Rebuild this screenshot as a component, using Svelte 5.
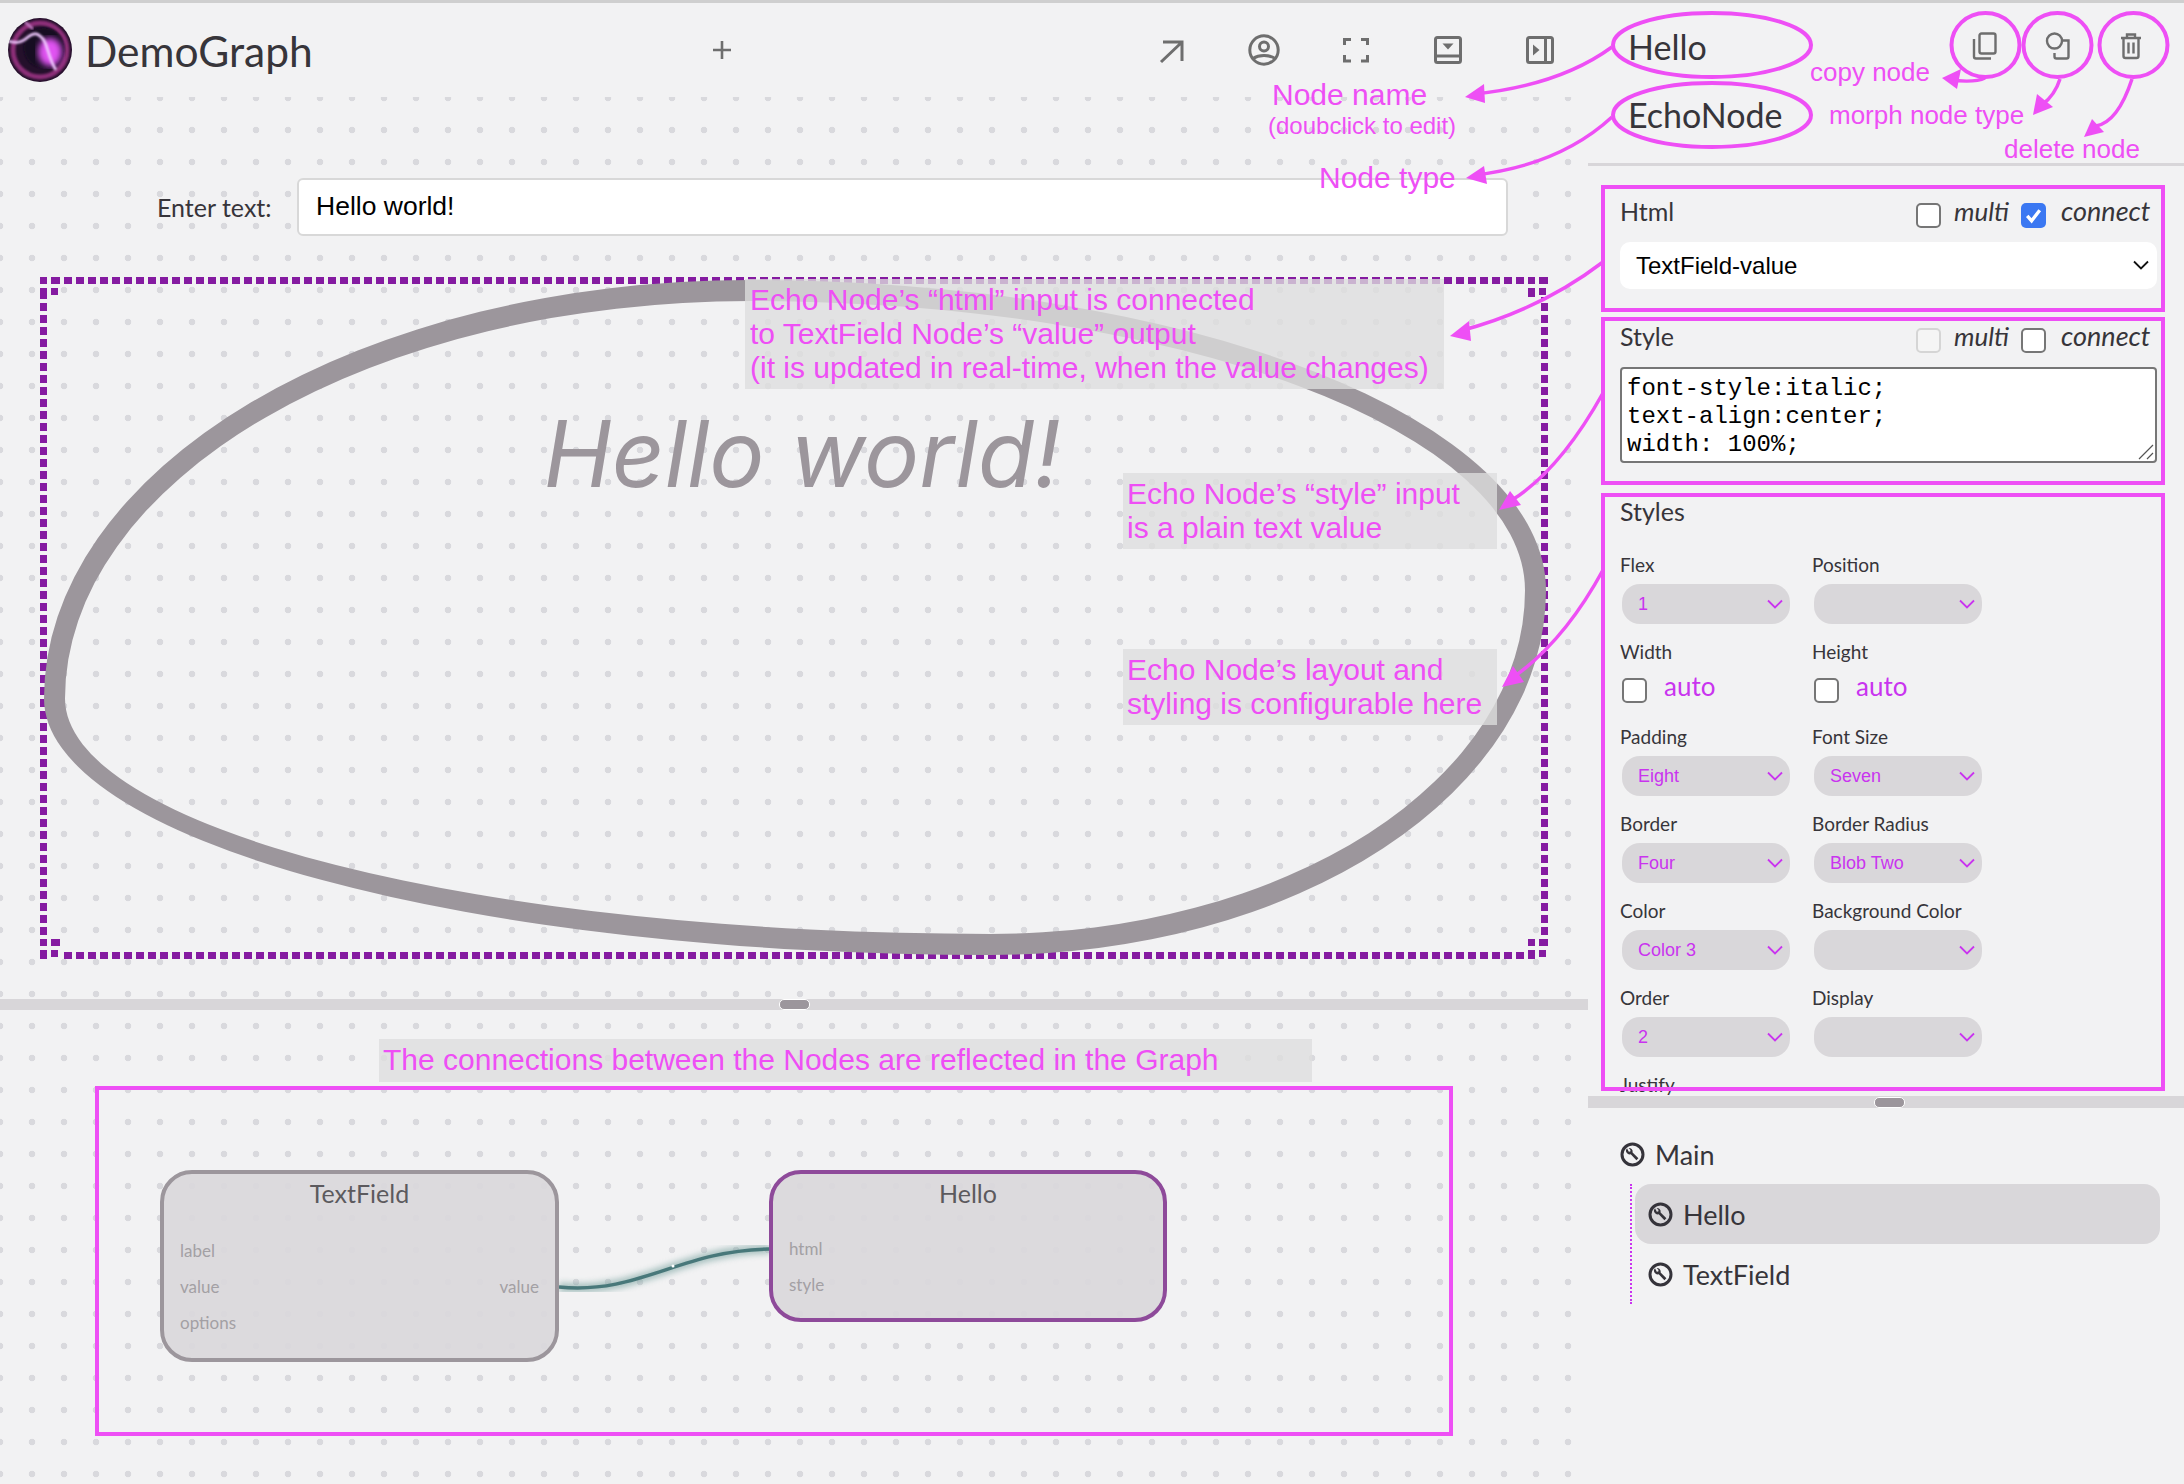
<script>
    const stylesLeft = [
        { label: 'Flex', value: '1' },
        { label: 'Position', value: '' },
        { label: 'Width', check: 'auto' },
        { label: 'Height', check: 'auto' },
        { label: 'Padding', value: 'Eight' },
        { label: 'Font Size', value: 'Seven' },
        { label: 'Border', value: 'Four' },
        { label: 'Border Radius', value: 'Blob Two' },
        { label: 'Color', value: 'Color 3' },
        { label: 'Background Color', value: '' },
        { label: 'Order', value: '2' },
        { label: 'Display', value: '' },
        { label: 'Justify', value: '' }
    ];

    // arrows of the annotation layer: curve and head triangle
    const arrows = [
        { d: 'M1612 47 Q1560 85 1475 94', head: '1465,97 1484,84 1485,103' },
        { d: 'M1612 117 Q1560 165 1475 175', head: '1466,178 1484,166 1487,184' },
        { d: 'M1985 78 Q1975 83 1950 80', head: '1942,78 1961,69 1957,89' },
        { d: 'M2060 79 Q2055 95 2042 105', head: '2033,115 2037,94 2053,107' },
        { d: 'M2132 79 Q2118 122 2096 126', head: '2084,137 2092,119 2104,132' },
        { d: 'M1603 262 Q1540 310 1460 331', head: '1450,336 1469,321 1471,341' },
        { d: 'M1603 393 Q1560 470 1512 500', head: '1499,510 1510,491 1521,505' },
        { d: 'M1603 570 Q1565 640 1515 676', head: '1502,687 1513,666 1524,682' }
    ];
</script>

{#snippet wrench()}
    <svg class="tree-icon" viewBox="0 0 25 25">
        <circle cx="12.5" cy="12.5" r="10.5" fill="none" stroke="#35333a" stroke-width="3" />
        <path d="M7 6.200a3.800 3.800 0 0 0 .4 5.300 3.800 3.800 0 0 0 3.300.8l5.700 5.900 2-2-5.800-5.700a3.800 3.800 0 0 0-1-3.400 3.800 3.800 0 0 0-3-1.100l1.900 2-.2 1.500-1.500.3z" fill="#35333a" />
    </svg>
{/snippet}

{#snippet chevron()}
    <svg class="chev" viewBox="0 0 16 10"><path d="M1 1.500l7 7 7-7" fill="none" stroke="currentColor" stroke-width="1.800" /></svg>
{/snippet}

<div class="page">
    <div class="topline"></div>

    <div class="left">
        <header class="header">
            <svg class="logo" viewBox="0 0 64 64">
                <defs>
                    <clipPath id="logoclip"><circle cx="32" cy="32" r="32" /></clipPath>
                    <filter id="soft"><feGaussianBlur stdDeviation="0.800" /></filter>
                    <filter id="glow"><feGaussianBlur stdDeviation="3" /></filter>
                </defs>
                <g clip-path="url(#logoclip)">
                    <rect width="64" height="64" fill="#24102b" />
                    <circle cx="32" cy="32" r="27" fill="none" stroke="#8c2f78" stroke-width="5" filter="url(#soft)" />
                    <circle cx="36" cy="30" r="20" fill="#130a20" filter="url(#soft)" />
                    <ellipse cx="42" cy="34" rx="12" ry="14" fill="#e052f2" filter="url(#glow)" />
                    <path d="M0 23C10 26 14 24 20 19S30 15 35 21 40 40 48 52" fill="none" stroke="#f0c8ff" stroke-width="2.800" filter="url(#soft)" />
                    <path d="M17 4l8 7" stroke="#c47cc4" stroke-width="2.500" filter="url(#soft)" />
                </g>
            </svg>
            <h1 class="brand">DemoGraph</h1>
            <svg class="plus" viewBox="0 0 24 24"><path d="M12 3v18M3 12h18" stroke="#6e6e6e" stroke-width="2.600" /></svg>
            <div class="tools">
                <svg viewBox="0 0 32 32"><path d="M5 28L25 9M7 8h19v19" fill="none" stroke="#6e6e6e" stroke-width="3" /></svg>
                <svg viewBox="0 0 32 32" fill="none" stroke="#6e6e6e" stroke-width="3">
                    <circle cx="16" cy="16" r="14.200" /><circle cx="16" cy="12.500" r="4.500" /><path d="M5 24.500C11 20.500 21 20.500 27 24.500" />
                </svg>
                <svg viewBox="0 0 32 32"><path d="M4.500 11V5.500h6.500M21 5.500h6.500V11M4.500 21v6h6.500M21 27h6.500v-6" fill="none" stroke="#6e6e6e" stroke-width="3" /></svg>
                <svg viewBox="0 0 32 32">
                    <rect x="3.500" y="3.500" width="25" height="25" rx="2" fill="none" stroke="#6e6e6e" stroke-width="3" />
                    <path d="M3.500 22h25" stroke="#6e6e6e" stroke-width="3" /><path d="M10.500 9.500h11L16 15.500z" fill="#6e6e6e" />
                </svg>
                <svg viewBox="0 0 32 32">
                    <rect x="3.500" y="3.500" width="25" height="25" rx="2" fill="none" stroke="#6e6e6e" stroke-width="3" />
                    <path d="M21.500 3.500v25" stroke="#6e6e6e" stroke-width="3" /><path d="M9 10.500v11l6.500-5.500z" fill="#6e6e6e" />
                </svg>
            </div>
        </header>

        <section class="canvas">
            <div class="form-row">
                <label for="txt">Enter text:</label>
                <input id="txt" type="text" value="Hello world!" />
            </div>
            <div class="frame">
                <div class="blob"><p>Hello world!</p></div>
                <svg class="corner tl" viewBox="0 0 20 20"><use href="#cornermark" /></svg>
                <svg class="corner tr" viewBox="0 0 20 20"><use href="#cornermark" /></svg>
                <svg class="corner bl" viewBox="0 0 20 20"><use href="#cornermark" /></svg>
                <svg class="corner br" viewBox="0 0 20 20">
                    <g id="cornermark" fill="#851ba1"><rect width="7" height="7" /><rect x="11" width="9" height="7" /><rect y="11" width="7" height="9" /><rect x="11" y="11" width="7" height="7" /></g>
                </svg>
            </div>
        </section>

        <div class="splitter"><span class="grip"></span></div>

        <section class="graph">
            <svg class="edge" viewBox="0 0 800 400">
                <defs><filter id="halo"><feGaussianBlur stdDeviation="3" /></filter></defs>
                <path d="M559 277C640 285 680 240 770 239" fill="none" stroke="#6f9c99" stroke-width="9" opacity=".6" filter="url(#halo)" />
                <path d="M559 277C640 285 680 240 770 239" fill="none" stroke="#48787a" stroke-width="3.500" />
                <circle cx="673" cy="256" r="1.500" fill="#fff" />
            </svg>
            <div class="node node-a">
                <div class="node-title">TextField</div>
                <div class="ports">
                    <span>label</span>
                    <span class="port-line"><span>value</span><span>value</span></span>
                    <span>options</span>
                </div>
            </div>
            <div class="node node-b">
                <div class="node-title">Hello</div>
                <div class="ports">
                    <span>html</span>
                    <span>style</span>
                </div>
            </div>
        </section>
    </div>

    <aside class="right">
        <div class="node-head">
            <div class="names">
                <div>Hello</div>
                <div>EchoNode</div>
            </div>
            <div class="actions">
                <svg viewBox="0 0 26 28" fill="none" stroke="#6e6e6e" stroke-width="2.400">
                    <rect x="7.500" y="1.500" width="16" height="20" rx="2" /><path d="M2 7v17.500a2 2 0 0 0 2 2h15" />
                </svg>
                <svg viewBox="0 0 26 28" fill="none" stroke="#6e6e6e" stroke-width="2.400">
                    <circle cx="9.500" cy="9" r="7.500" /><path d="M18 8.500h5.500v16a2 2 0 0 1-2 2H11.500a2 2 0 0 1-2-2V21" />
                </svg>
                <svg viewBox="0 0 26 28" fill="none" stroke="#6e6e6e" stroke-width="2.400">
                    <path d="M3 6h20M9 6V2.500h8V6M5.500 6v18a2 2 0 0 0 2 2h11a2 2 0 0 0 2-2V6M10.500 10.500v11M15.500 10.500v11" />
                </svg>
            </div>
        </div>

        <div class="inspector">
            <div class="prop prop-html">
                <div class="prop-head">
                    <span class="prop-name">Html</span>
                    <span class="box"></span><em>multi</em>
                    <span class="box on">
                        <svg viewBox="0 0 26 26"><path d="M6.500 13.500l4.500 5 8.500-11" fill="none" stroke="#fff" stroke-width="3.500" /></svg>
                    </span><em class="last">connect</em>
                </div>
                <div class="select-wide">TextField-value {@render chevron()}</div>
            </div>

            <div class="prop prop-style">
                <div class="prop-head">
                    <span class="prop-name">Style</span>
                    <span class="box off"></span><em>multi</em>
                    <span class="box"></span><em class="last">connect</em>
                </div>
                <div class="textarea">
                    <div>font-style:italic;</div>
                    <div>text-align:center;</div>
                    <div>width: 100%;</div>
                    <svg class="resizer" viewBox="0 0 16 16"><path d="M15 1L1 15M15 9L9 15" stroke="#555" stroke-width="1.200" /></svg>
                </div>
            </div>

            <div class="prop-name styles-title">Styles</div>
            <div class="styles-grid">
                {#each stylesLeft as f}
                    <div class="field">
                        <div class="field-label">{f.label}</div>
                        {#if f.check}
                            <div class="check-row"><span class="box"></span><span class="auto">{f.check}</span></div>
                        {:else}
                            <div class="pill"><span>{f.value}</span>{@render chevron()}</div>
                        {/if}
                    </div>
                {/each}
            </div>
        </div>

        <div class="splitter side"><span class="grip"></span></div>

        <nav class="tree">
            <div class="tree-main">{@render wrench()} Main</div>
            <div class="tree-children">
                <div class="tree-row selected">{@render wrench()} Hello</div>
                <div class="tree-row">{@render wrench()} TextField</div>
            </div>
        </nav>
    </aside>

    <!-- annotations drawn over the screenshot -->
    <svg class="notes" viewBox="0 0 2184 1484">
        <g fill="rgba(222,222,222,.78)">
            <rect x="745" y="279" width="699" height="110" />
            <rect x="1123" y="473" width="374" height="76" />
            <rect x="1123" y="649" width="374" height="76" />
            <rect x="379" y="1039" width="933" height="43" />
        </g>
        <g class="outline">
            <ellipse cx="1712" cy="45" rx="99" ry="32" />
            <ellipse cx="1712" cy="115" rx="99" ry="32" />
            <ellipse cx="1985.500" cy="45" rx="34" ry="32" />
            <ellipse cx="2057.500" cy="45" rx="34" ry="32" />
            <ellipse cx="2133.500" cy="45" rx="34" ry="32" />
            <rect x="1603" y="187" width="560" height="123" />
            <rect x="1603" y="319" width="560" height="164" />
            <rect x="1603" y="495" width="560" height="594" />
            <rect x="97" y="1088" width="1354" height="346" />
        </g>
        {#each arrows as a}
            <path class="arrow" d={a.d} />
            <polygon class="head" points={a.head} />
        {/each}
        <g class="note">
            <text x="750" y="310">Echo Node’s “html” input is connected</text>
            <text x="750" y="344">to TextField Node’s “value” output</text>
            <text x="750" y="378">(it is updated in real-time, when the value changes)</text>
            <text x="1127" y="504">Echo Node’s “style” input</text>
            <text x="1127" y="538">is a plain text value</text>
            <text x="1127" y="680">Echo Node’s layout and</text>
            <text x="1127" y="714">styling is configurable here</text>
            <text x="383" y="1070">The connections between the Nodes are reflected in the Graph</text>
            <text x="1272" y="105">Node name</text>
            <text x="1268" y="134" class="small">(doubclick to edit)</text>
            <text x="1319" y="188">Node type</text>
            <text x="1810" y="81" class="mid">copy node</text>
            <text x="1829" y="124" class="mid">morph node type</text>
            <text x="2004" y="158" class="mid">delete node</text>
        </g>
    </svg>
</div>

<style>
    :global(body) {
        margin: 0;
        background: #f2f2f3;
    }

    .page {
        position: relative;
        width: 2184px;
        height: 1484px;
        overflow: hidden;
        display: grid;
        grid-template-columns: 1588px 596px;
        grid-template-rows: 3px 1481px;
        background: #f2f2f3;
        color: #37353a;
        font-family: Lato, "Noto Sans", sans-serif;
    }

    .topline {
        grid-column: 1 / 3;
        background: #cfcfcf;
    }

    .left {
        display: flex;
        flex-direction: column;
        background-color: #f2f2f3;
        background-image: radial-gradient(circle at 16px 16px, #d9d9dd 3px, transparent 3.600px);
        background-size: 32px 32px;
        background-position: 16px 15px;
    }

    .header {
        height: 94px;
        flex: none;
        display: flex;
        align-items: center;
        padding: 0 32px 0 8px;
        background: #f2f2f3;
        box-sizing: border-box;
    }

    .logo {
        width: 64px;
        height: 64px;
        flex: none;
    }

    .brand {
        margin: 0 0 0 13px;
        width: 226px;
        font-size: 42.500px;
        font-weight: 400;
        white-space: nowrap;
    }

    .plus {
        width: 24px;
        height: 24px;
        margin-left: 399px;
    }

    .tools {
        margin-left: auto;
        display: flex;
        gap: 60px;
    }

    .tools svg {
        width: 32px;
        height: 32px;
    }

    .canvas {
        flex: none;
        height: 902px;
        box-sizing: border-box;
        padding: 81px 40px 0;
    }

    .form-row {
        display: flex;
        align-items: center;
        gap: 25px;
        padding-left: 117px;
        width: 1351px;
    }

    .form-row label {
        font-size: 25px;
        width: 115px;
        white-space: nowrap;
    }

    .form-row input {
        flex: 1;
        height: 58px;
        box-sizing: border-box;
        border: 2px solid #d8d8d8;
        border-radius: 6px;
        background: #fff;
        padding: 0 18px 2px 17px;
        font: 26.500px "Liberation Sans", Arial, sans-serif;
        color: #000;
    }

    .frame {
        position: relative;
        margin-top: 41px;
        width: 1508px;
        height: 682px;
        box-sizing: border-box;
        padding: 3px 2px 4px 4px;
        background:
            repeating-linear-gradient(90deg, #851ba1 0 8px, transparent 8px 12px) top left / 100% 7px no-repeat,
            repeating-linear-gradient(90deg, #851ba1 0 8px, transparent 8px 12px) bottom left / 100% 7px no-repeat,
            repeating-linear-gradient(0deg, #851ba1 0 8px, transparent 8px 12px) top left / 7px 100% no-repeat,
            repeating-linear-gradient(0deg, #851ba1 0 8px, transparent 8px 12px) top right / 7px 100% no-repeat;
    }

    .blob {
        height: 100%;
        box-sizing: border-box;
        border: 21px solid #9c969c;
        border-radius: 47% 53% 37% 63% / 62% 46% 54% 38%;
        padding: 98px 0 0 14px;
        color: #9c969c;
    }

    .blob p {
        margin: 0;
        font-family: Inter, Lato, sans-serif;
        font-size: 92px;
        font-style: italic;
        font-weight: 400;
        line-height: 110px;
        text-align: center;
    }

    .corner {
        position: absolute;
        width: 20px;
        height: 20px;
        background: #f2f2f3;
    }

    .tl { left: 0; top: 0; }
    .tr { right: 0; top: 0; }
    .bl { left: 0; bottom: 0; }
    .br { right: 0; bottom: 0; }

    .splitter {
        position: relative;
        flex: none;
        height: 11px;
        background: #d8d6d9;
    }

    .splitter.side {
        height: 12px;
    }

    .grip {
        position: absolute;
        left: 779px;
        top: 0;
        width: 29px;
        height: 9px;
        border: 1px solid #fff;
        border-radius: 5px;
        background: #9c969c;
    }

    .side .grip {
        left: 286px;
        top: 1px;
    }

    .graph {
        position: relative;
        flex: 1;
    }

    .edge {
        position: absolute;
        left: 0;
        top: 0;
        width: 800px;
        height: 400px;
        overflow: visible;
    }

    .node {
        position: absolute;
        top: 160px;
        box-sizing: border-box;
        width: 398px;
        border: 4px solid #9c969c;
        border-radius: 32px;
        background: rgba(218, 216, 219, 0.92);
        color: #5c5a5e;
    }

    .node-a {
        left: 160px;
        width: 399px;
        height: 192px;
    }

    .node-b {
        left: 769px;
        height: 152px;
        border-color: #8e4a9a;
    }

    .node-title {
        margin-top: 4px;
        text-align: center;
        font-size: 25px;
        line-height: 30px;
    }

    .ports {
        margin-top: 31px;
        padding: 0 16px;
        display: flex;
        flex-direction: column;
        gap: 12px;
        font-size: 17px;
        line-height: 24px;
        color: #a3a0a4;
    }

    .node-b .ports {
        margin-top: 29px;
    }

    .port-line {
        display: flex;
        justify-content: space-between;
    }

    .right {
        display: flex;
        flex-direction: column;
        background: #f2f2f3;
    }

    .node-head {
        flex: none;
        height: 163px;
        box-sizing: border-box;
        border-bottom: 3px solid #d8d6d9;
        display: flex;
        justify-content: space-between;
        padding-left: 40px;
    }

    .names {
        padding-top: 24px;
        display: flex;
        flex-direction: column;
        gap: 28px;
        font-size: 34px;
        line-height: 40px;
    }

    .actions {
        display: flex;
        gap: 47px;
        padding: 29px 40px 0 0;
    }

    .actions svg {
        width: 26px;
        height: 28px;
    }

    .inspector {
        flex: none;
        height: 930px;
        overflow: hidden;
        box-sizing: border-box;
        padding: 0 27px 0 32px;
    }

    .prop-head {
        display: flex;
        align-items: center;
        height: 26px;
        font-size: 26px;
    }

    .prop-name {
        margin-right: auto;
        font-size: 25px;
    }

    .prop-head .prop-name {
        margin-bottom: 8px;
    }

    .prop-head em {
        margin: 0 10px 8px 13px;
        width: 57px;
        line-height: 26px;
    }

    .prop-head em.last {
        width: 96px;
        margin: 0 0 8px 15px;
        font-size: 27px;
    }

    .prop-html {
        padding-top: 36px;
    }

    .prop-style {
        padding-top: 38px;
    }

    .box {
        flex: none;
        display: inline-block;
        width: 25px;
        height: 25px;
        box-sizing: border-box;
        border: 2px solid #767676;
        border-radius: 5px;
        background: #fff;
    }

    .box.on {
        border: none;
        background: #3b78f2;
    }

    .box.on svg {
        display: block;
    }

    .box.off {
        border-color: #d5d5d5;
        background: #f5f5f5;
    }

    .select-wide {
        position: relative;
        margin-top: 14px;
        height: 47px;
        padding-left: 16px;
        border-radius: 10px;
        background: #fff;
        color: #000;
        font: 24px/48px "Liberation Sans", Arial, sans-serif;
    }

    .select-wide .chev {
        position: absolute;
        right: 8px;
        top: 18px;
        color: #111;
    }

    .textarea {
        position: relative;
        margin-top: 14px;
        height: 96px;
        box-sizing: border-box;
        border: 2px solid #767676;
        border-radius: 4px;
        background: #fff;
        color: #000;
        padding: 6px 5px 0;
        font: 24px/28px "Liberation Mono", monospace;
    }

    .resizer {
        position: absolute;
        right: 1px;
        bottom: 1px;
        width: 16px;
        height: 16px;
    }

    .styles-title {
        margin-top: 33px;
        line-height: 30px;
    }

    .styles-grid {
        margin-top: 26px;
        display: grid;
        grid-template-columns: 192px 192px;
        row-gap: 15px;
    }

    .field-label {
        height: 26px;
        line-height: 26px;
        font-size: 19px;
    }

    .pill {
        margin: 6px 0 0 2px;
        width: 168px;
        height: 40px;
        box-sizing: border-box;
        padding: 0 7px 0 16px;
        border-radius: 18px;
        background: #d9d7da;
        color: #c934ef;
        display: flex;
        align-items: center;
        justify-content: space-between;
        font: 18px "Liberation Sans", Arial, sans-serif;
    }

    .chev {
        width: 16px;
        height: 10px;
        display: block;
    }

    .check-row {
        margin: 6px 0 0 2px;
        height: 38px;
        display: flex;
        align-items: center;
        gap: 17px;
    }

    .auto {
        color: #c934ef;
        font-size: 26px;
        line-height: 30px;
        margin-top: -8px;
    }

    .tree {
        padding: 34px 24px 0 32px;
        font-size: 27px;
    }

    .tree-icon {
        width: 25px;
        height: 25px;
        flex: none;
    }

    .tree-main,
    .tree-row {
        display: flex;
        align-items: center;
        gap: 10px;
    }

    .tree-main {
        height: 25px;
    }

    .tree-children {
        margin: 17px 0 0 10px;
        padding: 0 0 0 3px;
        border-left: 2px dotted #c934ef;
    }

    .tree-row {
        height: 60px;
        padding-left: 13px;
        border-radius: 16px;
    }

    .selected {
        background: #d9d7da;
    }

    .notes {
        position: absolute;
        left: 0;
        top: 0;
        width: 2184px;
        height: 1484px;
        pointer-events: none;
    }

    .outline ellipse,
    .outline rect {
        fill: none;
        stroke: #ee4ff5;
        stroke-width: 4;
    }

    .arrow {
        fill: none;
        stroke: #ee4ff5;
        stroke-width: 3.500;
    }

    .head {
        fill: #ee4ff5;
    }

    .note text {
        fill: #ee4ff5;
        font: 30px "Liberation Sans", Arial, sans-serif;
    }

    .note text.small {
        font-size: 24px;
    }

    .note text.mid {
        font-size: 26px;
    }
</style>
